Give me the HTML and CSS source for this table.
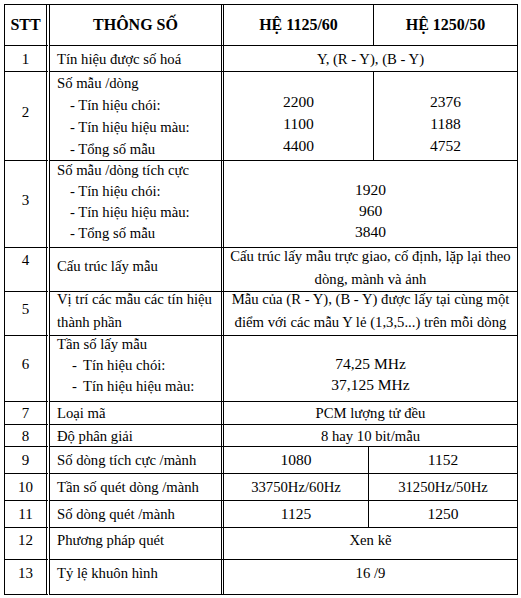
FILE: index.html
```html
<!DOCTYPE html>
<html lang="vi">
<head>
<meta charset="utf-8">
<title>Thông số</title>
<link rel="stylesheet" href="styles.css">
</head>
<body>
<div class="table">
  <div class="c stt head">STT</div>
  <div class="c param head center">THÔNG SỐ</div>
  <div class="c val head span2">HỆ 1125/60</div>
  <div class="c val head">HỆ 1250/50</div>

  <div class="c stt">1</div>
  <div class="c param">Tín hiệu được số hoá</div>
  <div class="c val span3">Y, (R - Y), (B - Y)</div>

  <div class="c stt r2">2</div>
  <div class="c param r2">
    <div>Số mẫu /dòng</div>
    <div class="sub">- Tín hiệu chói:</div>
    <div class="sub">- Tín hiệu hiệu màu:</div>
    <div class="sub">- Tổng số mẫu</div>
  </div>
  <div class="c val span2 r2 nums"><div>2200</div><div>1100</div><div>4400</div></div>
  <div class="c val r2 nums"><div>2376</div><div>1188</div><div>4752</div></div>

  <div class="c stt r3">3</div>
  <div class="c param r3">
    <div>Số mẫu /dòng tích cực</div>
    <div class="sub">- Tín hiệu chói:</div>
    <div class="sub">- Tín hiệu hiệu màu:</div>
    <div class="sub">- Tổng số mẫu</div>
  </div>
  <div class="c val span3 r3 nums"><div>1920</div><div>960</div><div>3840</div></div>

  <div class="c stt r4">4</div>
  <div class="c param r4 low">Cấu trúc lấy mẫu</div>
  <div class="c val span3 r4"><div>Cấu trúc lấy mẫu trực giao, cố định, lặp lại theo</div><div>dòng, mành và ảnh</div></div>

  <div class="c stt r5">5</div>
  <div class="c param r5"><div>Vị trí các mẫu các tín hiệu</div><div>thành phần</div></div>
  <div class="c val span3 r5"><div>Mẫu của (R - Y), (B - Y) được lấy tại cùng một</div><div>điểm với các mẫu Y lẻ (1,3,5...) trên mỗi dòng</div></div>

  <div class="c stt r6">6</div>
  <div class="c param r6">
    <div>Tần số lấy mẫu</div>
    <div class="li"><span class="dash">-</span>Tín hiệu chói:</div>
    <div class="li"><span class="dash">-</span>Tín hiệu hiệu màu:</div>
  </div>
  <div class="c val span3 r6 nums"><div>74,25 MHz</div><div>37,125 MHz</div></div>

  <div class="c stt">7</div>
  <div class="c param">Loại mã</div>
  <div class="c val span3">PCM lượng tử đều</div>

  <div class="c stt">8</div>
  <div class="c param">Độ phân giải</div>
  <div class="c val span3">8 hay 10 bit/mẫu</div>

  <div class="c stt">9</div>
  <div class="c param">Số dòng tích cực /mành</div>
  <div class="c val num">1080</div>
  <div class="c val span2 num">1152</div>

  <div class="c stt">10</div>
  <div class="c param">Tần số quét dòng /mành</div>
  <div class="c val">33750Hz/60Hz</div>
  <div class="c val span2">31250Hz/50Hz</div>

  <div class="c stt">11</div>
  <div class="c param">Số dòng quét /mành</div>
  <div class="c val num">1125</div>
  <div class="c val span2 num">1250</div>

  <div class="c stt up">12</div>
  <div class="c param up">Phương pháp quét</div>
  <div class="c val span3 up">Xen kẽ</div>

  <div class="c stt up">13</div>
  <div class="c param up">Tỷ lệ khuôn hình</div>
  <div class="c val span3 up">16 /9</div>
</div>
</body>
</html>
```

FILE: styles.css
```css
html, body {
  margin: 0;
  padding: 0;
  background: #fff;
}

body {
  font-family: "Liberation Serif", "Times New Roman", serif;
  font-size: 14.7px;
  color: #000;
}

.table {
  display: grid;
  grid-template-columns: 45px 174px 145px 5px 144px;
  grid-template-rows: 41px 26px 89px 87px 44px 44px 66px 23px 22px 27px 27px 27px 32px 35px;
  width: 514px;
  margin: 4px 0 0 4px;
  border-left: 1px solid #000;
  border-top: 1px solid #000;
  box-sizing: border-box;
}

.c {
  box-sizing: border-box;
  border-right: 1px solid #000;
  border-bottom: 1px solid #000;
  display: flex;
  flex-direction: column;
  justify-content: center;
  padding: 0 7px;
  line-height: 22px;
  white-space: nowrap;
}

.stt {
  border-right: 4px double #000;
  align-items: center;
  padding: 0;
  font-size: 15px;
}

.param {
  border-right: 3px double #000;
}

.val {
  align-items: center;
  text-align: center;
  padding: 0 2px;
}

.span2 { grid-column: span 2; }
.span3 { grid-column: span 3; }

.head {
  font-weight: bold;
  font-size: 16px;
}

.center {
  align-items: center;
}

.sub {
  padding-left: 13px;
}

.li {
  padding-left: 15px;
}

.dash {
  display: inline-block;
  width: 11px;
}

.nums {
  justify-content: flex-end;
  padding-bottom: 3px;
  font-size: 15.5px;
}

.num {
  font-size: 15.5px;
}

.r3 { line-height: 21px; }
.r3.param { padding-bottom: 4px; }
.r3.nums { padding-bottom: 5px; }
.r4 { line-height: 23px; }
.r4.val { padding-bottom: 4px; }
.r5 { line-height: 23px; }
.r5.param, .r5.val { padding-bottom: 5px; }
.r6 { line-height: 21px; }
.r6.param { padding-bottom: 7px; }
.r6.val { padding-bottom: 6px; }

.r2.stt, .r3.stt, .r6.stt, .r5.stt { padding-bottom: 8px; }
.r4.stt { justify-content: flex-start; padding-top: 1px; }
.low { padding-bottom: 6px; }

.up { padding-bottom: 8px; }
```
